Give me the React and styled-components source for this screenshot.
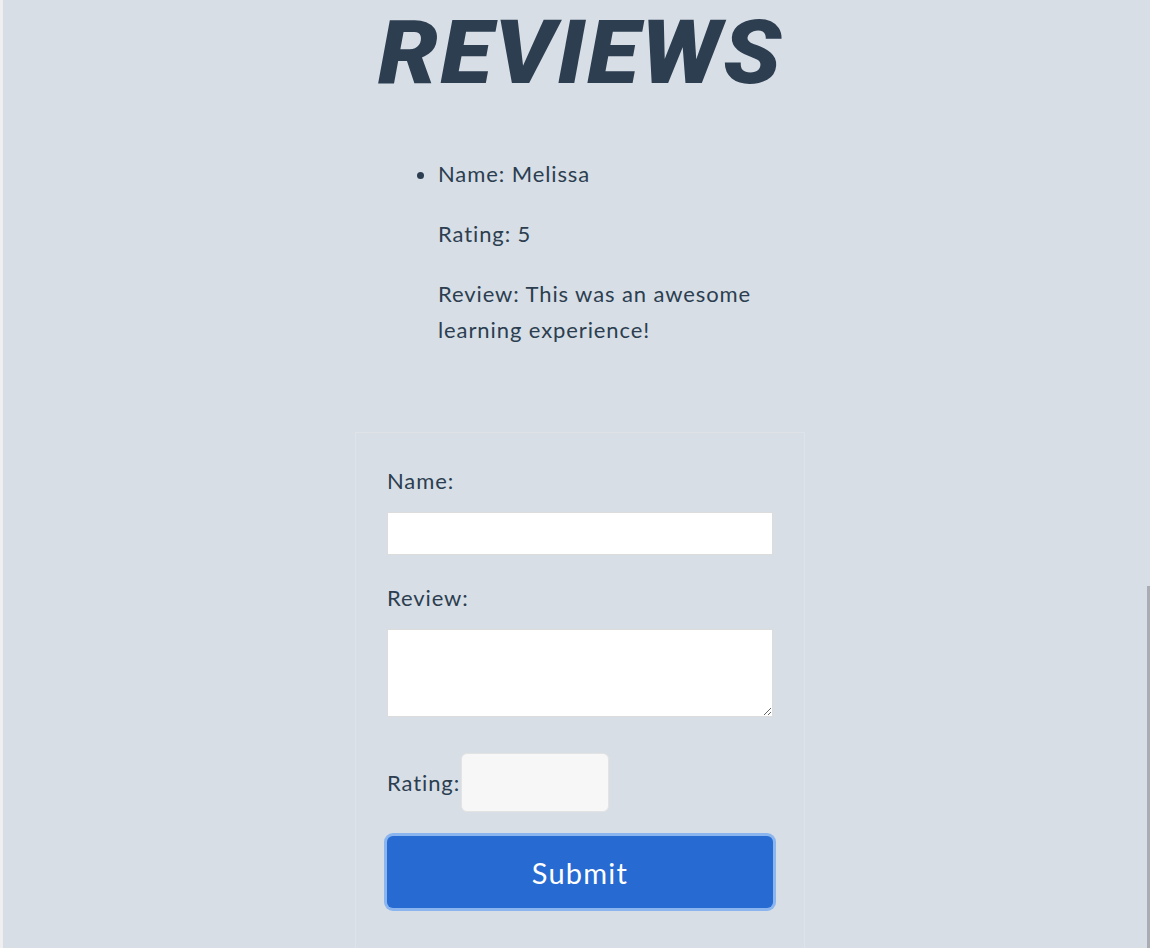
import React, { useState } from "react";
import styled, { createGlobalStyle } from "styled-components";

const GlobalStyle = createGlobalStyle`
  html, body {
    margin: 0;
    padding: 0;
    background: #efefef;
  }
  body {
    font-family: Lato, "Open Sans", sans-serif;
    color: #2c3e50;
    overflow: hidden;
  }
`;

const Page = styled.div`
  margin-left: 3px;
  padding-left: 7px;
  min-height: 100vh;
  background: #d7dee6;
  display: flex;
  flex-direction: column;
  align-items: center;
`;

const Title = styled.h1`
  margin: -2px 0 0;
  padding-left: 2px;
  font-family: Roboto, "Liberation Sans", sans-serif;
  font-weight: 900;
  font-style: italic;
  font-size: 88px;
  line-height: 110px;
  letter-spacing: 2px;
  color: #2d3e50;
  transform: scaleX(1.08);
`;

const ReviewList = styled.ul`
  width: 364px;
  box-sizing: border-box;
  margin: 48px 0 0;
  padding-left: 40px;
  font-size: 22px;
  line-height: 36px;
  letter-spacing: 0.9px;
`;

const ReviewItem = styled.li`
  p {
    margin: 0 0 24px;
  }
`;

const FormBox = styled.form`
  width: 450px;
  box-sizing: border-box;
  margin-top: 60px;
  padding: 30px 31px 80px;
  border: 1px solid #dfe3e8;
  font-size: 22px;
  line-height: 36px;
  letter-spacing: 0.9px;
`;

const Label = styled.label`
  display: block;
  margin-bottom: 13px;
`;

const TextInput = styled.input`
  display: block;
  width: 100%;
  height: 43px;
  box-sizing: border-box;
  margin-bottom: 25px;
  border: 1px solid #dcdcdc;
  background: #fff;
  font: inherit;
  outline: none;
`;

const TextArea = styled.textarea`
  display: block;
  width: 100%;
  height: 88px;
  box-sizing: border-box;
  margin: 0;
  border: 1px solid #dcdcdc;
  background: #fff;
  font: inherit;
  outline: none;
`;

const RatingRow = styled.div`
  display: flex;
  align-items: center;
  margin-top: 36px;
`;

const RatingInput = styled.input`
  width: 148px;
  height: 59px;
  box-sizing: border-box;
  margin: 0 0 0 1px;
  border: 1px solid #e3e3e3;
  border-radius: 6px;
  background: #f7f7f7;
  font: inherit;
  outline: none;
`;

const SubmitButton = styled.button`
  display: block;
  width: 100%;
  height: 72px;
  margin-top: 24px;
  border: none;
  border-radius: 6px;
  background: #276ad1;
  box-shadow: 0 0 0 3px #8ab5ee;
  color: #fff;
  font-family: Lato, "Open Sans", sans-serif;
  font-size: 29px;
  letter-spacing: 1.2px;
  cursor: pointer;
`;

const ScrollThumb = styled.div`
  position: fixed;
  right: 0;
  top: 586px;
  bottom: 0;
  width: 3px;
  background: #a9adb3;
`;

export default function App() {
  const [name, setName] = useState("");
  const [review, setReview] = useState("");
  const [rating, setRating] = useState("");

  return (
    <>
      <GlobalStyle />
      <Page>
        <Title>REVIEWS</Title>
        <ReviewList>
          <ReviewItem>
            <p>Name: Melissa</p>
            <p>Rating: 5</p>
            <p>Review: This was an awesome learning experience!</p>
          </ReviewItem>
        </ReviewList>
        <FormBox onSubmit={(e) => e.preventDefault()}>
          <Label htmlFor="name">Name:</Label>
          <TextInput id="name" value={name} onChange={(e) => setName(e.target.value)} />
          <Label htmlFor="review">Review:</Label>
          <TextArea id="review" value={review} onChange={(e) => setReview(e.target.value)} />
          <RatingRow>
            <label htmlFor="rating">Rating:</label>
            <RatingInput id="rating" value={rating} onChange={(e) => setRating(e.target.value)} />
          </RatingRow>
          <SubmitButton type="submit">Submit</SubmitButton>
        </FormBox>
      </Page>
      <ScrollThumb />
    </>
  );
}
